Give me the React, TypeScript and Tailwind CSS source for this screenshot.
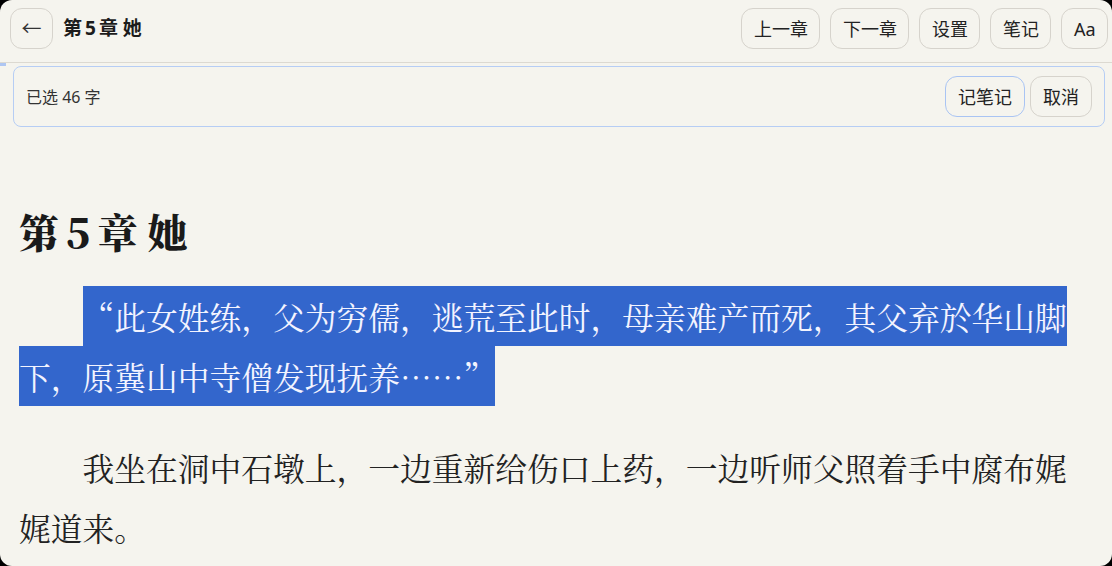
import React from "react";

const uiFont = { fontFamily: '"Noto Sans", "Noto Sans CJK SC", sans-serif' };
const readFont = {
  fontFamily: '"Noto Serif CJK SC", "Noto Sans CJK SC", "Liberation Serif", serif',
};

const navButtons = ["上一章", "下一章", "设置", "笔记", "Aa"];

export default function App() {
  return (
    <div className="h-[566px] w-full bg-black" style={uiFont}>
      <div className="flex h-full flex-col overflow-hidden rounded-[12px] bg-[#f5f4ee] text-[#222]">
        {/* Header */}
        <header className="flex h-[63px] shrink-0 items-start justify-between border-b border-[#dcd9d1] pl-[10px] pr-[4px] pt-[8px]">
          <div className="flex h-[41px] items-center gap-[10px]">
            <button className="flex h-[41px] w-[43px] items-center justify-center rounded-[12px] border border-[#d6d3cc] text-[20px] text-[#333]">
              ←
            </button>
            <h1 className="text-[19px] font-bold text-[#1c1c1c]">
              第<span className="mx-[3px]">5</span>章 她
            </h1>
          </div>
          <div className="flex items-center gap-[10px]">
            {navButtons.map((label) => (
              <button
                key={label}
                className="h-[41px] rounded-[12px] border border-[#d6d3cc] px-[11.5px] text-[18px] leading-none text-[#222]"
              >
                {label}
              </button>
            ))}
          </div>
        </header>

        {/* Reading progress */}
        <div className="h-[3px] shrink-0">
          <div className="h-full w-[6px] bg-[#aec6f2]" />
        </div>

        {/* Selection bar */}
        <div className="ml-[13px] mr-[7px] flex h-[61px] shrink-0 items-center justify-between rounded-[8px] border border-[#b6cdf4] px-[12px]">
          <span className="text-[16px] text-[#333]">已选 46 字</span>
          <div className="flex items-center gap-[5px]">
            <button className="h-[41px] rounded-[12px] border border-[#a9c4f3] px-[12px] text-[18px] leading-none text-[#222]">
              记笔记
            </button>
            <button className="h-[41px] rounded-[12px] border border-[#d6d3cc] px-[12px] text-[18px] leading-none text-[#222]">
              取消
            </button>
          </div>
        </div>

        {/* Chapter content */}
        <article className="px-[19px]" style={readFont}>
          <h2 className="mt-[79px] text-[40px] font-black leading-[50px] text-[#1a1a1a]">
            第<span className="mx-[7px]">5</span>章 她
          </h2>
          <p className="mt-[30px] indent-[2em] text-[31.75px] leading-[60px] text-[#222]">
            <span className="box-decoration-clone bg-[#3366cc] py-[7px] text-[#f3f4ff]">
              “此女姓练，父为穷儒，逃荒至此时，母亲难产而死，其父弃於华山脚下，原冀山中寺僧发现抚养……”
            </span>
          </p>
          <p className="mt-[31px] indent-[2em] text-[31.75px] leading-[60px] text-[#222]">
            我坐在洞中石墩上，一边重新给伤口上药，一边听师父照着手中腐布娓娓道来。
          </p>
        </article>
      </div>
    </div>
  );
}
